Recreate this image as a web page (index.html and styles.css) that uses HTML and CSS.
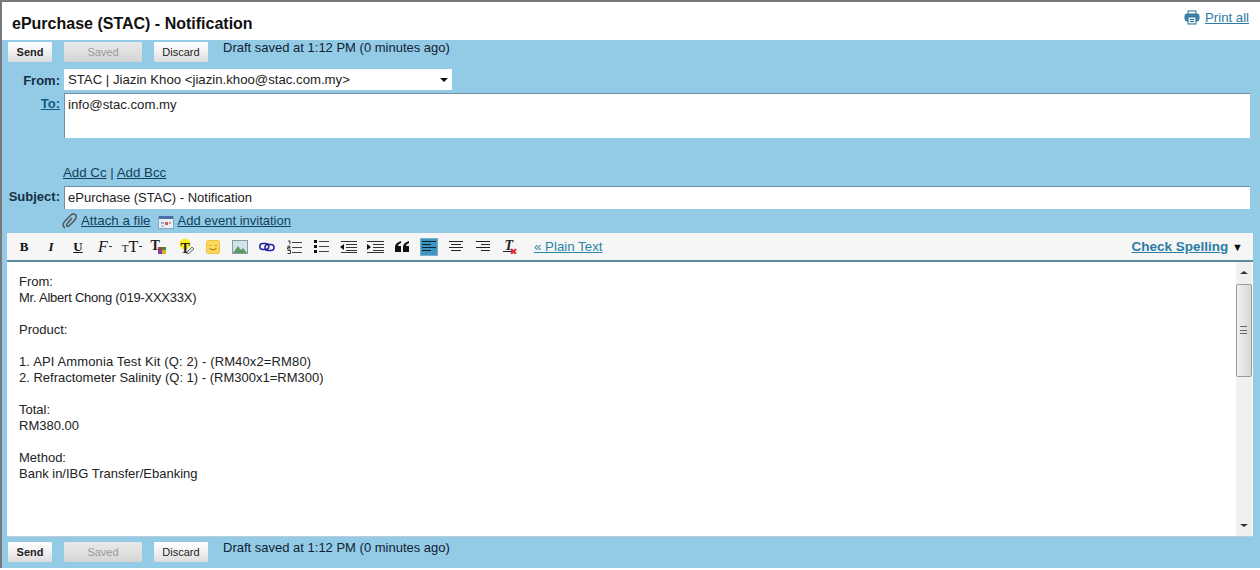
FILE: index.html
```html
<!DOCTYPE html>
<html lang="en">
<head>
<meta charset="utf-8">
<title>ePurchase (STAC) - Notification</title>
<link rel="stylesheet" href="styles.css">
</head>
<body>
<div class="frame">
  <header class="head">
    <h1 class="title">ePurchase (STAC) - Notification</h1>
    <a class="print" href="#">
      <svg width="16" height="15" viewBox="0 0 16 15"><rect x="4" y="1" width="8" height="4" fill="#fff" stroke="#2a7296"/><rect x="1" y="4" width="14" height="7" rx="2" fill="#3f88ab" stroke="#2a7296"/><rect x="4" y="7" width="8" height="7" fill="#e8f2f7" stroke="#2a7296"/><path d="M6 9.500h4M6 11.500h4" stroke="#2a7296"/></svg>
      <span>Print all</span>
    </a>
  </header>
  <main class="compose">
    <div class="actions">
      <button class="btn send">Send</button>
      <button class="btn saved">Saved</button>
      <button class="btn discard">Discard</button>
      <span class="status">Draft saved at 1:12 PM (0 minutes ago)</span>
    </div>
    <div class="row from-row">
      <label class="lab">From:</label>
      <div class="select"><span>STAC | Jiazin Khoo &lt;jiazin.khoo@stac.com.my&gt;</span><i class="caret"></i></div>
    </div>
    <div class="row to-row">
      <a class="lab lab-link" href="#">To:</a>
      <div class="to-box">info@stac.com.my</div>
    </div>
    <div class="row cc-row">
      <span></span>
      <div class="dark-text"><a href="#">Add Cc</a> | <a href="#">Add Bcc</a></div>
    </div>
    <div class="row subject-row">
      <label class="lab">Subject:</label>
      <div class="subject-box">ePurchase (STAC) - Notification</div>
    </div>
    <div class="row attach-row">
      <span></span>
      <div class="attach">
        <svg width="16" height="17" viewBox="0 0 16 17"><path d="M3 15 C0 13 1 10 3 8 L9 2 C11 0 14 1 14 3 C15 5 13 6 12 8 L7 13 C5 14 4 12 5 11 L10 5" fill="none" stroke="#555" stroke-width="1.500"/></svg>
        <a href="#">Attach a file</a>
        <svg class="cal" width="16" height="15" viewBox="0 0 16 15"><rect x=".5" y="2.500" width="15" height="12" fill="#e8f0f6" stroke="#8aa6bb"/><rect x="1" y="2" width="14" height="3" fill="#4a6fa5"/><rect x="3" y="8" width="3" height="2" fill="#8fb0d0"/><rect x="7" y="8" width="3" height="3" fill="#d9534f"/><rect x="11" y="8" width="2" height="2" fill="#c9a0a0"/><rect x="3" y="11" width="3" height="2" fill="#b7c9da"/></svg>
        <a class="event" href="#">Add event invitation</a>
      </div>
    </div>
    <div class="toolbar">
      <div class="tools">
        <span class="tool glyph-b">B</span>
        <span class="tool glyph-i">I</span>
        <span class="tool glyph-u">U</span>
        <span class="tool glyph-f">F<i class="mini"></i></span>
        <span class="tool glyph-t"><small>T</small>T<i class="mini"></i></span>
        <span class="tool">
          <svg width="18" height="16" viewBox="0 0 18 16"><rect x="8" y="8" width="4" height="3" fill="#c0392b"/><rect x="12" y="8" width="4" height="3" fill="#3c8d40"/><rect x="8" y="11" width="4" height="4" fill="#7b3fa0"/><rect x="12" y="11" width="4" height="4" fill="#d8b030"/></svg>
          <span class="over-t">T</span>
        </span>
        <span class="tool">
          <svg width="18" height="17" viewBox="0 0 18 17"><circle cx="8" cy="6" r="5.500" fill="#f6ee22"/><path d="M9 15 L15 9 L17 11 L11 16 Z" fill="#ddd" stroke="#777"/></svg>
          <span class="over-t high-t">T</span>
        </span>
        <span class="tool">
          <svg width="14" height="14" viewBox="0 0 14 14"><rect x=".5" y=".5" width="13" height="13" rx="2" fill="#fbd75b" stroke="#eec040"/><path d="M4 5v1M10 5v1" stroke="#a06a00"/><path d="M3.500 8.500 Q7 11.500 10.500 8.500" fill="none" stroke="#a06a00"/></svg>
        </span>
        <span class="tool">
          <svg width="16" height="14" viewBox="0 0 16 14"><rect x=".5" y=".5" width="15" height="13" fill="#cfe3ea" stroke="#8a9a9f"/><path d="M1 13 L6 6 L9 10 L11 8 L15 13 Z" fill="#5f9a68"/></svg>
        </span>
        <span class="tool">
          <svg width="16" height="10" viewBox="0 0 16 10"><rect x=".8" y="1.500" width="9" height="6" rx="3" fill="none" stroke="#2020a0" stroke-width="1.500"/><rect x="6" y="2.500" width="9" height="6" rx="3" fill="none" stroke="#2020a0" stroke-width="1.500"/></svg>
        </span>
        <span class="tool">
          <svg width="15" height="14" viewBox="0 0 15 14"><path d="M5 2.500h10M5 7.500h10M5 12.500h10" stroke="#444"/><path d="M1 1h2v3M.500 6h2.500v1.500h-2.500v1.500h3M.500 10.500h3v3h-3" fill="none" stroke="#222" stroke-width=".9"/></svg>
        </span>
        <span class="tool">
          <svg width="15" height="13" viewBox="0 0 15 13"><path d="M5 1.500h10M5 6.500h10M5 11.500h10" stroke="#444"/><path d="M0 0h3v3H0zM0 5h3v3H0zM0 10h3v3H0z" fill="#111"/></svg>
        </span>
        <span class="tool">
          <svg width="17" height="12" viewBox="0 0 17 12"><path d="M1 .5h16M6 3.500h11M6 6.500h11M6 9.500h11M1 11.500h16" stroke="#333"/><path d="M0 6 L4 3 V9 Z" fill="#111"/></svg>
        </span>
        <span class="tool">
          <svg width="17" height="12" viewBox="0 0 17 12"><path d="M0 .5h17M6 3.500h11M6 6.500h11M6 9.500h11M0 11.500h17" stroke="#333"/><path d="M4 6 L0 3 V9 Z" fill="#111"/></svg>
        </span>
        <span class="tool">
          <svg width="14" height="11" viewBox="0 0 14 11"><path d="M6 0C3 1 0 3 0 6v5h6V5H3c0-1 1-2 3-3zM14 0c-3 1-6 3-6 6v5h6V5h-3c0-1 1-2 3-3z" fill="#111"/></svg>
        </span>
        <span class="tool active">
          <svg width="14" height="11" viewBox="0 0 14 11"><path d="M0 .5h14M0 3.500h9M0 6.500h14M0 9.500h9" stroke="#0c2230"/></svg>
        </span>
        <span class="tool">
          <svg width="14" height="11" viewBox="0 0 14 11"><path d="M0 .5h14M2 3.500h10M0 6.500h14M2 9.500h10" stroke="#222"/></svg>
        </span>
        <span class="tool">
          <svg width="14" height="11" viewBox="0 0 14 11"><path d="M0 .5h14M5 3.500h9M0 6.500h14M5 9.500h9" stroke="#222"/></svg>
        </span>
        <span class="tool">
          <svg width="14" height="15" viewBox="0 0 14 15"><path d="M0 12.500h9" stroke="#222"/><path d="M8 10 L13 15 M13 10 L8 15" stroke="#e02b3b" stroke-width="2"/></svg>
          <span class="over-t clear-t">T</span>
        </span>
      </div>
      <a class="plain" href="#">« Plain Text</a>
      <div class="spell"><a href="#">Check Spelling</a> <span class="arrow">▼</span></div>
    </div>
    <div class="editor">
      <div class="body-text">
        <p>From:<br><span class="tight">Mr. Albert Chong (019-XXX33X)</span></p>
        <p>Product:</p>
        <p><span class="wide">1. API Ammonia Test Kit (Q: 2) - (RM40x2=RM80)</span><br>2. Refractometer Salinity (Q: 1) - (RM300x1=RM300)</p>
        <p>Total:<br>RM380.00</p>
        <p>Method:<br>Bank in/IBG Transfer/Ebanking</p>
      </div>
      <div class="scrollbar">
        <i class="sb-up"></i>
        <div class="thumb"><i class="grip"></i></div>
        <i class="sb-down"></i>
      </div>
    </div>
    <div class="actions bottom">
      <button class="btn send">Send</button>
      <button class="btn saved">Saved</button>
      <button class="btn discard">Discard</button>
      <span class="status">Draft saved at 1:12 PM (0 minutes ago)</span>
    </div>
  </main>
</div>
</body>
</html>
```

FILE: styles.css
```css
* { box-sizing: border-box; }
html, body { margin: 0; padding: 0; background: #fff; }
body { width: 1260px; height: 570px; overflow: hidden; font: 13px/16px "Liberation Sans", Arial, sans-serif; color: #222; }
a { color: inherit; }
.frame { border-top: 2px solid #77797c; border-left: 2px solid #77797c; height: 568px; display: flex; flex-direction: column; }
.head { flex: none; height: 38px; display: flex; justify-content: space-between; padding: 7px 11px 0 10px; }
.title { margin: 5px 0 0; font-size: 16px; line-height: 20px; font-weight: bold; color: #111; }
.print { display: flex; align-items: flex-start; gap: 4px; margin-top: 1px; color: #2a7ca5; font-size: 13.200px; line-height: 16px; }
.print svg { margin-right: 1px; }
.compose { flex: 1; background: #93cbe6; display: flex; flex-direction: column; padding-left: 5px; }
.actions { flex: none; display: flex; height: 29px; padding: 2px 0 0 1px; }
.btn { height: 20px; padding: 0; border: 0; border-radius: 1px; font: 11px/20px "Liberation Sans", Arial, sans-serif; background: linear-gradient(#fff, #f4f4f4 40%, #dcdcdc); color: #222; }
.send { width: 44px; font-weight: bold; }
.saved { width: 78px; margin-left: 12px; color: #999; background: linear-gradient(#e8e8e8, #e0e0e0 50%, #d4d4d4); }
.discard { width: 54px; margin-left: 12px; }
.status { margin: -2px 0 0 15px; line-height: 16px; color: #123; }
.row { display: grid; grid-template-columns: 53px 1fr; column-gap: 4px; flex: none; }
.lab { text-align: right; font-size: 13px; font-weight: bold; color: #143042; }
.lab-link { color: #0e5a85; }
.from-row { height: 24px; }
.from-row .lab { line-height: 23px; }
.select { width: 388px; height: 21px; background: #fff; display: flex; justify-content: space-between; align-items: center; padding: 0 4px; color: #222; font-size: 13.200px; }
.caret { border: 4px solid transparent; border-top: 4px solid #111; border-bottom: 0; }
.to-row { height: 72px; grid-template-columns: 53px 1186px; }
.to-row .lab { line-height: 22px; }
.to-box { height: 45px; background: #fff; border: 1px solid #6f8fa0; border-width: 1px 0 0 1px; padding: 3px; font-size: 13.200px; }
.cc-row { height: 21px; font-size: 13.300px; }
.dark-text { color: #12405c; white-space: nowrap; margin-left: -1px; }
.subject-row { height: 25px; grid-template-columns: 53px 1186px; }
.subject-row .lab { line-height: 22px; }
.subject-box { height: 23px; background: #fff; border: 1px solid #6f8fa0; border-width: 1px 0 0 1px; padding: 3px; }
.attach-row { height: 22px; font-size: 13.300px; }
.attach { display: flex; align-items: center; height: 20px; margin-left: -2px; color: #12405c; white-space: nowrap; }
.attach a { margin-left: 3px; }
.attach .cal { margin-left: 8px; }
.attach .event { font-size: 13px; }
.toolbar { flex: none; width: 1246px; height: 29px; display: flex; align-items: center; background: #f6f6f6; border-bottom: 2px solid #5d8a9c; padding-left: 3.500px; }
.tools { display: flex; }
.tool { position: relative; width: 27px; height: 18px; display: flex; align-items: center; justify-content: center; font-family: "Liberation Serif", serif; color: #111; }
.glyph-b { font-size: 13px; font-weight: bold; }
.glyph-i { font-size: 13px; font-style: italic; font-weight: bold; }
.glyph-u { font-size: 13px; font-weight: bold; text-decoration: underline; }
.glyph-f { font-size: 16px; font-style: italic; }
.glyph-t { font-size: 16px; }
.glyph-t small { font-size: 11px; margin-top: 3px; }
.mini { display: inline-block; width: 3px; height: 1px; margin-left: 1px; background: #333; }
.over-t { position: absolute; left: 5px; top: 0; font-size: 14px; line-height: 16px; font-weight: bold; color: #222; }
.high-t { left: 8px; top: 3px; }
.clear-t { left: 8px; font-style: italic; }
.active { width: 18px; margin: 0 4.500px; background: #3c95c3; border: 1px solid #7db0c8; }
.plain { margin-left: 10.500px; color: #2a85a8; font-size: 13.300px; }
.spell { margin-left: auto; padding-right: 10px; font-size: 13.500px; font-weight: bold; color: #2a7ca5; white-space: nowrap; }
.arrow { font-size: 11px; color: #111; }
.editor { flex: none; width: 1246px; height: 275px; background: #fff; display: flex; justify-content: space-between; border-bottom: 1px solid #bcd; }
.body-text { padding: 12px 0 0 12px; color: #222; }
.body-text p { margin: 0 0 16px; }
.tight { letter-spacing: -0.24px; }
.wide { letter-spacing: 0.13px; }
.scrollbar { position: relative; width: 16px; margin-right: 1px; background: #f0f0f0; }
.sb-up, .sb-down { position: absolute; left: 4px; border: 4px solid transparent; }
.sb-up { top: 9px; border-top: 0; border-bottom: 3px solid #333; }
.sb-down { bottom: 9px; border-bottom: 0; border-top: 3px solid #333; }
.thumb { position: absolute; left: 0; top: 22px; width: 16px; height: 93px; background: linear-gradient(90deg, #f2f2f2, #d6d6d6); border: 1px solid #9a9a9a; border-radius: 2px; }
.grip { position: absolute; left: 3px; top: 41px; width: 7px; height: 8px; border-top: 1px solid #666; border-bottom: 1px solid #666; background: linear-gradient(#666, #666) center / 7px 1px no-repeat; }
.bottom { height: 31px; padding-top: 5px; }
```
